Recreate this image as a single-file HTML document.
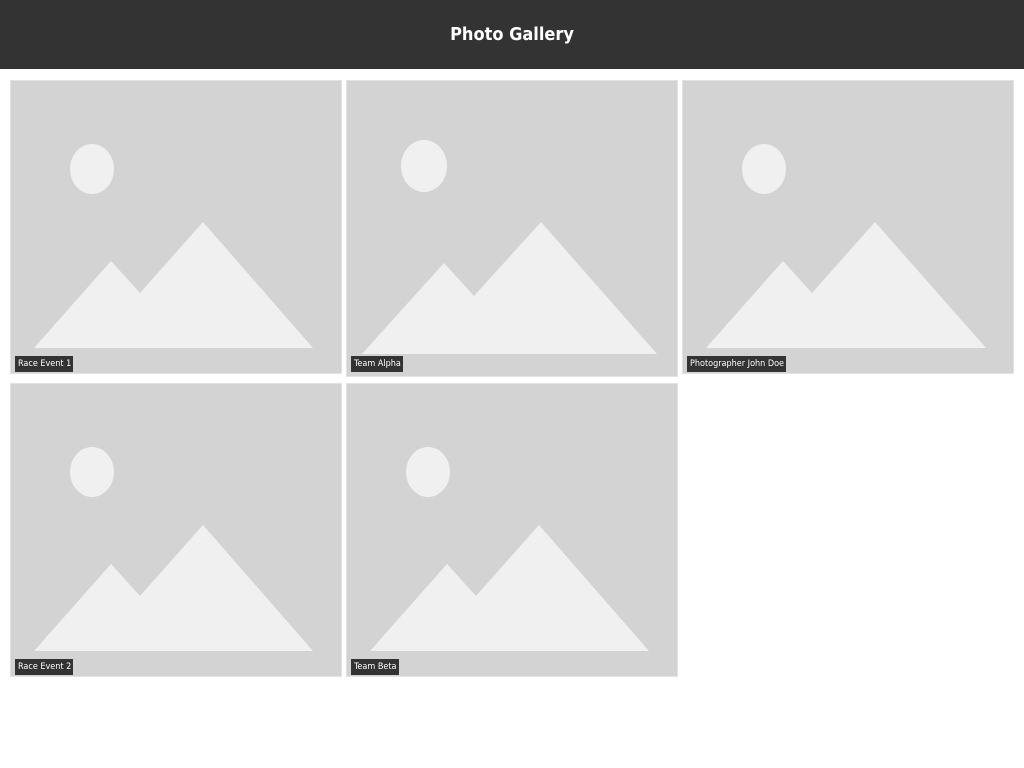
<!DOCTYPE html>
<html><head><meta charset="utf-8"><style>
*{margin:0;padding:0;box-sizing:border-box}
body{width:1024px;height:768px;background:#fff;font-family:"DejaVu Sans Condensed","DejaVu Sans","Liberation Sans",sans-serif;font-stretch:condensed;position:relative;overflow:hidden}
header{height:69px;background:#333;color:#fff;text-align:center;font-weight:bold;font-size:18px;line-height:69px}
.c{position:absolute;background:#d3d3d3;border:1px solid #e2e2e2}
.c svg{position:absolute;left:-1px;top:0}
.cap{position:absolute;left:4px;background:#333;color:#fff;font-size:9px;height:16px;line-height:17px;padding:0 2px 0 3px}
</style></head><body>
<header>Photo Gallery</header>

<div class="c" style="left:10px;top:80px;width:332px;height:294px">
<svg width="332" height="294"><ellipse cx="82" cy="88" rx="22" ry="25" fill="#f0f0f0"/><polygon points="24,267 101,180 130,212 193,141 303,267" fill="#f0f0f0"/></svg>
<div class="cap" style="top:275px">Race Event 1</div></div>

<div class="c" style="left:346px;top:80px;width:332px;height:297px">
<svg width="332" height="297"><ellipse cx="78" cy="85" rx="23" ry="26" fill="#f0f0f0"/><polygon points="16,273 98,182 128,215 195,141 311,273" fill="#f0f0f0"/></svg>
<div class="cap" style="top:275px">Team Alpha</div></div>

<div class="c" style="left:682px;top:80px;width:332px;height:294px">
<svg width="332" height="294"><ellipse cx="82" cy="88" rx="22" ry="25" fill="#f0f0f0"/><polygon points="24,267 101,180 130,212 193,141 304,267" fill="#f0f0f0"/></svg>
<div class="cap" style="top:275px">Photographer John Doe</div></div>

<div class="c" style="left:10px;top:383px;width:332px;height:294px">
<svg width="332" height="294"><ellipse cx="82" cy="88" rx="22" ry="25" fill="#f0f0f0"/><polygon points="24,267 101,180 130,212 193,141 303,267" fill="#f0f0f0"/></svg>
<div class="cap" style="top:275px">Race Event 2</div></div>

<div class="c" style="left:346px;top:383px;width:332px;height:294px">
<svg width="332" height="294"><ellipse cx="82" cy="88" rx="22" ry="25" fill="#f0f0f0"/><polygon points="24,267 101,180 130,212 193,141 303,267" fill="#f0f0f0"/></svg>
<div class="cap" style="top:275px">Team Beta</div></div>
</body></html>
